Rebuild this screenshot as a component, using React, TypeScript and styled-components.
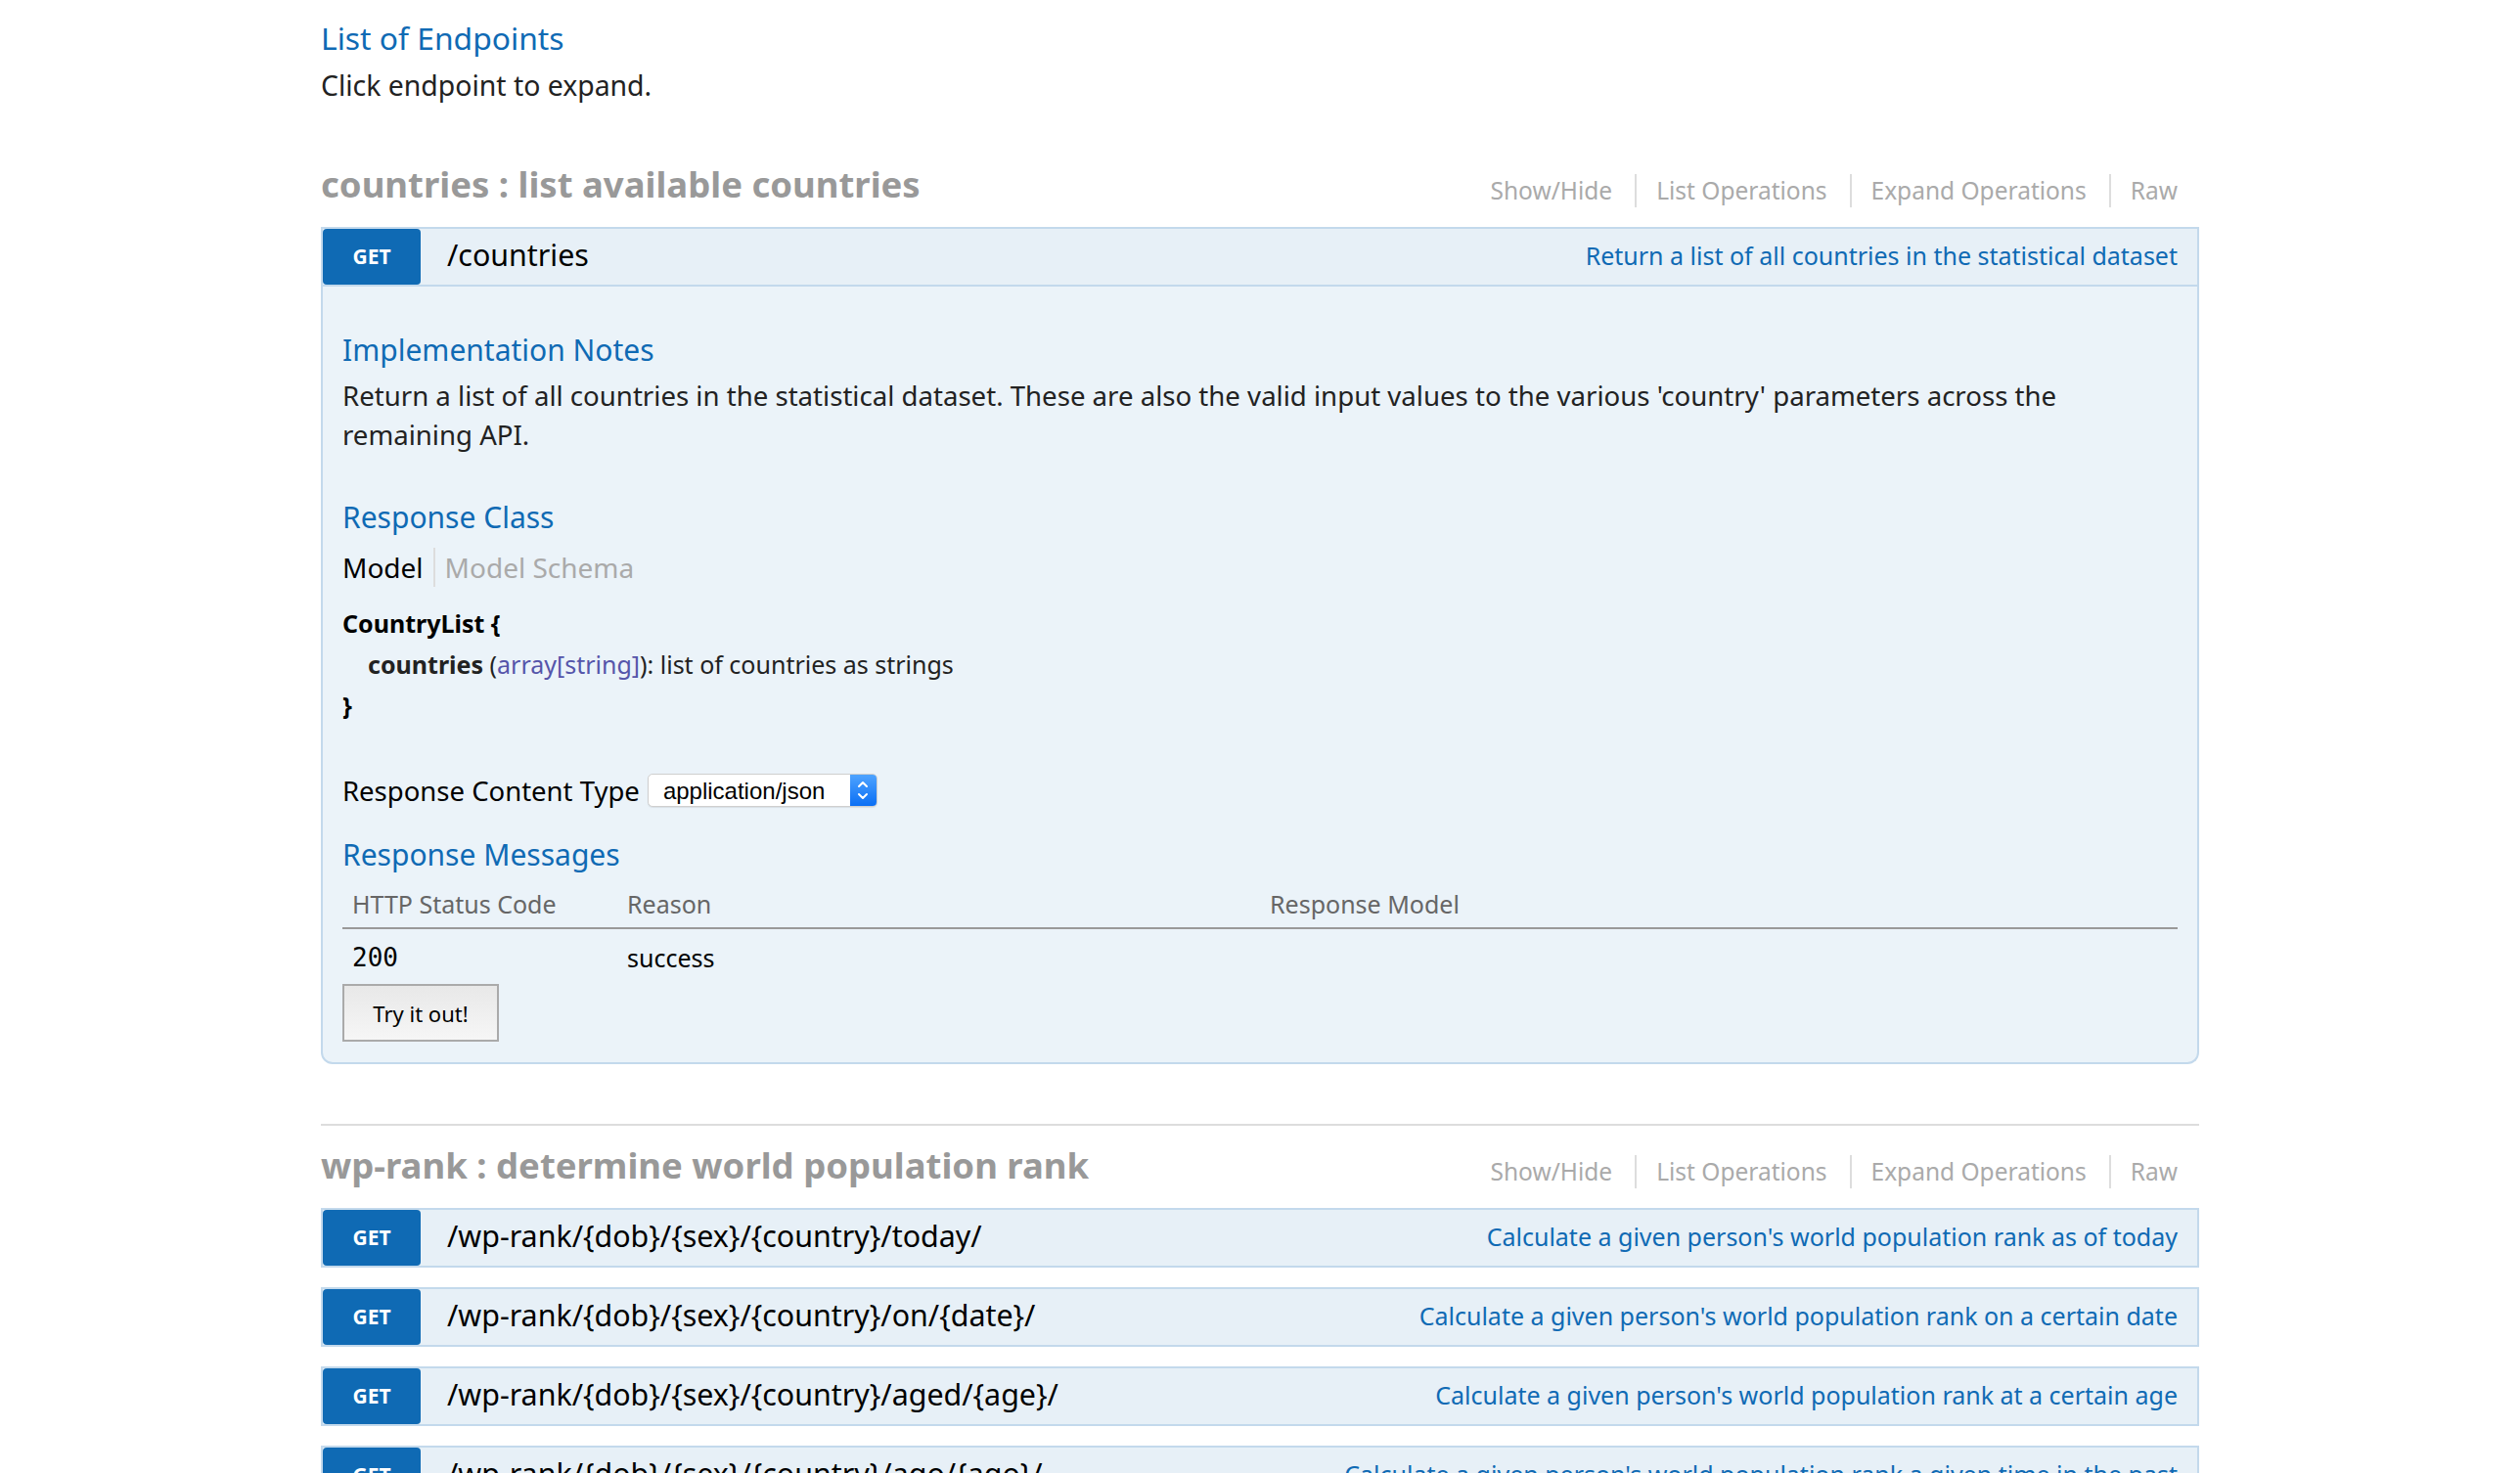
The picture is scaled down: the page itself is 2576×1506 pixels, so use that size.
import React from "react";
import styled, { createGlobalStyle } from "styled-components";

const GlobalStyle = createGlobalStyle`
  html, body { margin: 0; padding: 0; background: #ffffff; }
  body { font-family: "Noto Sans", "Open Sans", sans-serif; }
  *, *::before, *::after { box-sizing: border-box; }
`;

const Wrapper = styled.div`
  width: 1920px;
  margin: 0 auto;
  color: #333;
`;

const Intro = styled.div`
  padding-top: 19px;
  margin-bottom: 41px;
`;

const IntroTitle = styled.h2`
  margin: 0;
  font-size: 31.8px;
  line-height: 40px;
  font-weight: normal;
  color: #0f6ab4;
`;

const IntroText = styled.p`
  margin: 8px 0 0;
  font-size: 28.4px;
  line-height: 40px;
  color: #222;
`;

const ResourceList = styled.ul`
  list-style: none;
  margin: 0;
  padding: 0;
`;

const Resource = styled.li`
  padding-top: 18px;
  padding-bottom: 41px;
  border-bottom: 2px solid #ddd;
`;

const ResourceHeading = styled.div`
  display: flex;
  justify-content: space-between;
  align-items: flex-start;
  margin-bottom: 20px;
`;

const ResourceTitle = styled.h2`
  margin: 0;
  font-size: 36.5px;
  line-height: 44px;
  font-weight: bold;
  color: #999;
`;

const Options = styled.ul`
  display: flex;
  list-style: none;
  margin: 12px 0 0;
  padding: 0 22px 0 0;
`;

const OptionItem = styled.li`
  font-size: 24.5px;
  line-height: 34px;
  color: #aaa;
  padding: 0 23px 0 20px;
  border-right: 2px solid #ddd;
  &:first-child { padding-left: 0; }
  &:last-child { padding-right: 0; border-right: none; }
`;

const Operations = styled.ul`
  list-style: none;
  margin: 0;
  padding: 0;
`;

const Operation = styled.li`
  margin-bottom: 20px;
`;

const OpHeading = styled.div`
  display: flex;
  align-items: stretch;
  height: 61px;
  background: #e7f0f7;
  border: 2px solid #c3d9ec;
`;

const MethodBadge = styled.span`
  width: 100px;
  flex: none;
  display: flex;
  align-items: center;
  justify-content: center;
  padding-bottom: 1px;
  background: #0f6ab4;
  color: #fff;
  font-weight: bold;
  font-size: 21px;
  border-radius: 4px;
  text-transform: uppercase;
`;

const Path = styled.span`
  flex: 1;
  display: flex;
  align-items: center;
  padding: 0 0 4px 27px;
  font-size: 30.4px;
  color: #000;
  white-space: nowrap;
`;

const Summary = styled.span`
  display: flex;
  align-items: center;
  padding: 0 20px 4px 0;
  font-size: 25px;
  color: #0f6ab4;
  white-space: nowrap;
`;

const OpContent = styled.div`
  display: flex;
  flex-direction: column;
  align-items: stretch;
  background: #ebf3f9;
  border: 2px solid #c3d9ec;
  border-top: none;
  border-radius: 0 0 12px 12px;
  padding: 19px 20px 21px;
`;

const SectionTitle = styled.h4`
  margin: 28px 0 8px;
  font-size: 30px;
  line-height: 36px;
  font-weight: normal;
  color: #0f6ab4;
`;

const Paragraph = styled.p`
  margin: 0 0 19px;
  font-size: 27.6px;
  line-height: 40px;
  color: #222;
`;

const SignatureNav = styled.ul`
  display: flex;
  list-style: none;
  margin: 5px 0 0;
  padding: 0;
`;

const NavItem = styled.li<{ $selected?: boolean }>`
  font-size: 28px;
  line-height: 40px;
  padding: 0 10px;
  color: ${(p) => (p.$selected ? "#000" : "#aaa")};
  border-right: 2px solid #ddd;
  &:first-child { padding-left: 0; }
  &:last-child { border-right: none; }
`;

const Signature = styled.div`
  margin-top: 16px;
  font-size: 25px;
  line-height: 42px;
  color: #222;
`;

const SigLine = styled.div<{ $indent?: boolean }>`
  padding-left: ${(p) => (p.$indent ? "26px" : "0")};
`;

const Strong = styled.span<{ $dark?: boolean }>`
  font-weight: bold;
  color: ${(p) => (p.$dark ? "#000" : "#222")};
`;

const PropType = styled.span`
  color: #5555aa;
`;

const ContentTypeRow = styled.div`
  display: flex;
  align-items: center;
  gap: 8px;
  height: 40px;
  margin-top: 46px;
`;

const Label = styled.span`
  font-size: 27.5px;
  color: #000;
`;

const SelectBox = styled.div`
  display: flex;
  width: 235px;
  height: 34px;
  background: #fff;
  border: 1px solid #cfcfcf;
  border-radius: 5px;
  overflow: hidden;
  box-shadow: 0 1px 1px rgba(0, 0, 0, 0.08);
`;

const NativeSelect = styled.select`
  flex: 1;
  min-width: 0;
  appearance: none;
  -webkit-appearance: none;
  border: none;
  outline: none;
  background: transparent;
  font-family: "Liberation Sans", Arial, sans-serif;
  font-size: 24px;
  color: #000;
  padding: 0 0 0 15px;
  margin: 0;
`;

const SelectCap = styled.span`
  width: 27px;
  flex: none;
  display: flex;
  align-items: center;
  justify-content: center;
  background: linear-gradient(#4ea3ff, #0b6ff4);
`;

const Table = styled.div`
  display: grid;
  grid-template-columns: 281px 657px 1fr;
`;

const HeadCell = styled.div`
  font-size: 25px;
  line-height: 31px;
  padding: 9px 10px 8px;
  color: #666;
  border-bottom: 2px solid #999;
`;

const Cell = styled.div<{ $mono?: boolean }>`
  font-family: ${(p) => (p.$mono ? '"DejaVu Sans Mono", "Liberation Mono", monospace' : 'inherit')};
  font-size: ${(p) => (p.$mono ? "26px" : "25px")};
  line-height: 31px;
  padding: 14px 10px 4px;
  color: #000;
`;

const TryButton = styled.button`
  align-self: flex-start;
  margin-top: 7px;
  width: 160px;
  height: 59px;
  border: 2px solid #aaa;
  background: linear-gradient(#e8e8e8, #f6f6f6);
  font-family: "Noto Sans", sans-serif;
  font-size: 22px;
  color: #000;
  padding: 0;
  cursor: pointer;
`;

const Chevrons = () => (
  <svg width="14" height="22" viewBox="0 0 14 22" fill="none" stroke="#fff" strokeWidth="2" strokeLinecap="round" strokeLinejoin="round">
    <path d="M3 7 L7 3 L11 7" />
    <path d="M3 15 L7 19 L11 15" />
  </svg>
);

type Op = { path: string; summary: string };

const wpRankOps: Op[] = [
  { path: "/wp-rank/{dob}/{sex}/{country}/today/", summary: "Calculate a given person's world population rank as of today" },
  { path: "/wp-rank/{dob}/{sex}/{country}/on/{date}/", summary: "Calculate a given person's world population rank on a certain date" },
  { path: "/wp-rank/{dob}/{sex}/{country}/aged/{age}/", summary: "Calculate a given person's world population rank at a certain age" },
  { path: "/wp-rank/{dob}/{sex}/{country}/ago/{ago}/", summary: "Calculate a given person's world population rank a given time in the past" },
];

const ResourceOptions = () => (
  <Options>
    <OptionItem>Show/Hide</OptionItem>
    <OptionItem>List Operations</OptionItem>
    <OptionItem>Expand Operations</OptionItem>
    <OptionItem>Raw</OptionItem>
  </Options>
);

const OperationHeading = ({ path, summary }: Op) => (
  <OpHeading>
    <MethodBadge>Get</MethodBadge>
    <Path>{path}</Path>
    <Summary>{summary}</Summary>
  </OpHeading>
);

export default function App() {
  return (
    <>
      <GlobalStyle />
      <Wrapper>
        <Intro>
          <IntroTitle>List of Endpoints</IntroTitle>
          <IntroText>Click endpoint to expand.</IntroText>
        </Intro>
        <ResourceList>
          <Resource>
            <ResourceHeading>
              <ResourceTitle>countries : list available countries</ResourceTitle>
              <ResourceOptions />
            </ResourceHeading>
            <Operations>
              <Operation>
                <OperationHeading path="/countries" summary="Return a list of all countries in the statistical dataset" />
                <OpContent>
                  <SectionTitle>Implementation Notes</SectionTitle>
                  <Paragraph>
                    Return a list of all countries in the statistical dataset. These are also the valid input values to the various 'country' parameters across the remaining API.
                  </Paragraph>
                  <SectionTitle>Response Class</SectionTitle>
                  <SignatureNav>
                    <NavItem $selected>Model</NavItem>
                    <NavItem>Model Schema</NavItem>
                  </SignatureNav>
                  <Signature>
                    <SigLine><Strong $dark>CountryList {"{"}</Strong></SigLine>
                    <SigLine $indent>
                      <Strong>countries</Strong> (<PropType>array[string]</PropType>): list of countries as strings
                    </SigLine>
                    <SigLine><Strong $dark>{"}"}</Strong></SigLine>
                  </Signature>
                  <ContentTypeRow>
                    <Label>Response Content Type</Label>
                    <SelectBox>
                      <NativeSelect defaultValue="application/json">
                        <option value="application/json">application/json</option>
                      </NativeSelect>
                      <SelectCap><Chevrons /></SelectCap>
                    </SelectBox>
                  </ContentTypeRow>
                  <SectionTitle>Response Messages</SectionTitle>
                  <Table>
                    <HeadCell>HTTP Status Code</HeadCell>
                    <HeadCell>Reason</HeadCell>
                    <HeadCell>Response Model</HeadCell>
                    <Cell $mono>200</Cell>
                    <Cell>success</Cell>
                    <Cell />
                  </Table>
                  <TryButton>Try it out!</TryButton>
                </OpContent>
              </Operation>
            </Operations>
          </Resource>
          <Resource>
            <ResourceHeading>
              <ResourceTitle>wp-rank : determine world population rank</ResourceTitle>
              <ResourceOptions />
            </ResourceHeading>
            <Operations>
              {wpRankOps.map((op) => (
                <Operation key={op.path}>
                  <OperationHeading {...op} />
                </Operation>
              ))}
            </Operations>
          </Resource>
        </ResourceList>
      </Wrapper>
    </>
  );
}
